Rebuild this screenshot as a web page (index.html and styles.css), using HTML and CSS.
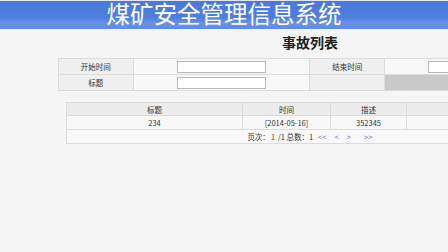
FILE: index.html
```html
<!DOCTYPE html>
<html lang="zh-CN">
<head>
    <meta charset="UTF-8">
    <title>事故列表</title>
    <link rel="stylesheet" href="styles.css">
</head>
<body>
    <header class="top-bar">
        <h1>煤矿安全管理信息系统</h1>
    </header>

    <div class="page">
        <h2 class="page-title">事故列表</h2>

        <table class="search-table">
            <tr>
                <td class="label">开始时间</td>
                <td class="field"><input type="text"></td>
                <td class="label">结束时间</td>
                <td class="field"><input type="text"></td>
            </tr>
            <tr>
                <td class="label">标题</td>
                <td class="field"><input type="text"></td>
                <td class="label"></td>
                <td class="blank"></td>
            </tr>
        </table>

        <table class="list-table">
            <tr class="head">
                <th class="col-title">标题</th>
                <th class="col-time">时间</th>
                <th class="col-desc">描述</th>
                <th class="col-op"></th>
            </tr>
            <tr>
                <td>234</td>
                <td>[2014-05-16]</td>
                <td>352345</td>
                <td></td>
            </tr>
            <tr>
                <td colspan="4" class="pager">
                    页次：<span class="current">1</span> /1 总数：1
                    <a href="#" class="nav first">&lt;&lt;</a>
                    <a href="#" class="nav">&lt;</a>
                    <a href="#" class="nav">&gt;</a>
                    <a href="#" class="nav last">&gt;&gt;</a>
                </td>
            </tr>
        </table>
    </div>
</body>
</html>
```

FILE: styles.css
```css
* {
    margin: 0;
    padding: 0;
    box-sizing: border-box;
}

body {
    background-color: #f5f5f5;
    color: #333;
    font-family: "Noto Sans CJK SC", sans-serif;
    font-size: 7.5px;
    overflow: hidden;
}

.top-bar {
    height: 29px;
    overflow: hidden;
    box-shadow: inset 0 1px 0 #dfe7f7;
    background: linear-gradient(to bottom, #4a78d9 0%, #4d7ddf 60%, #6a93e6 80%, #5f8ae2 100%);
    text-align: center;
}

.top-bar h1 {
    color: #fff;
    font-family: "Liberation Sans", "Noto Sans CJK SC", sans-serif;
    font-size: 23.5px;
    font-weight: normal;
    line-height: 27px;
    padding-top: 2px;
}

.page {
    width: 620px;
}

.page-title {
    text-align: center;
    font-size: 14px;
    line-height: 16px;
    padding-top: 5px;
    color: #222;
}

.search-table {
    width: 504px;
    margin: 8px 0 0 58px;
    border-collapse: collapse;
}

.search-table td {
    height: 16px;
    border: 1px solid #dcdcdc;
    text-align: center;
    vertical-align: middle;
}

.search-table .label {
    width: 75px;
    background-color: #efefef;
}

.search-table .field {
    width: 177px;
    background-color: #f8f8f8;
    text-align: left;
    padding-left: 43px;
}

.search-table .blank {
    background-color: #c9c9c9;
}

.search-table input {
    display: block;
    width: 89px;
    height: 12px;
    border: 1px solid #b9b9b9;
    background-color: #fff;
}

.list-table {
    width: 488px;
    margin: 11px 0 0 66px;
    border-collapse: collapse;
}

.list-table th,
.list-table td {
    border: 1px solid #dcdcdc;
    text-align: center;
    font-weight: normal;
    height: 14px;
    background-color: #f8f8f8;
}

.list-table .head th {
    height: 13px;
    background-color: #ececec;
}

.col-title { width: 176px; }
.col-time { width: 88px; }
.col-desc { width: 76px; }

.pager .current {
    color: #e02020;
    margin: 0 1px;
}

.pager .nav {
    color: #8a63d2;
    font-size: 8px;
    text-decoration: none;
    margin-left: 6px;
}

.pager .first {
    margin-left: 3px;
}

.pager .last {
    margin-left: 11px;
}
```
